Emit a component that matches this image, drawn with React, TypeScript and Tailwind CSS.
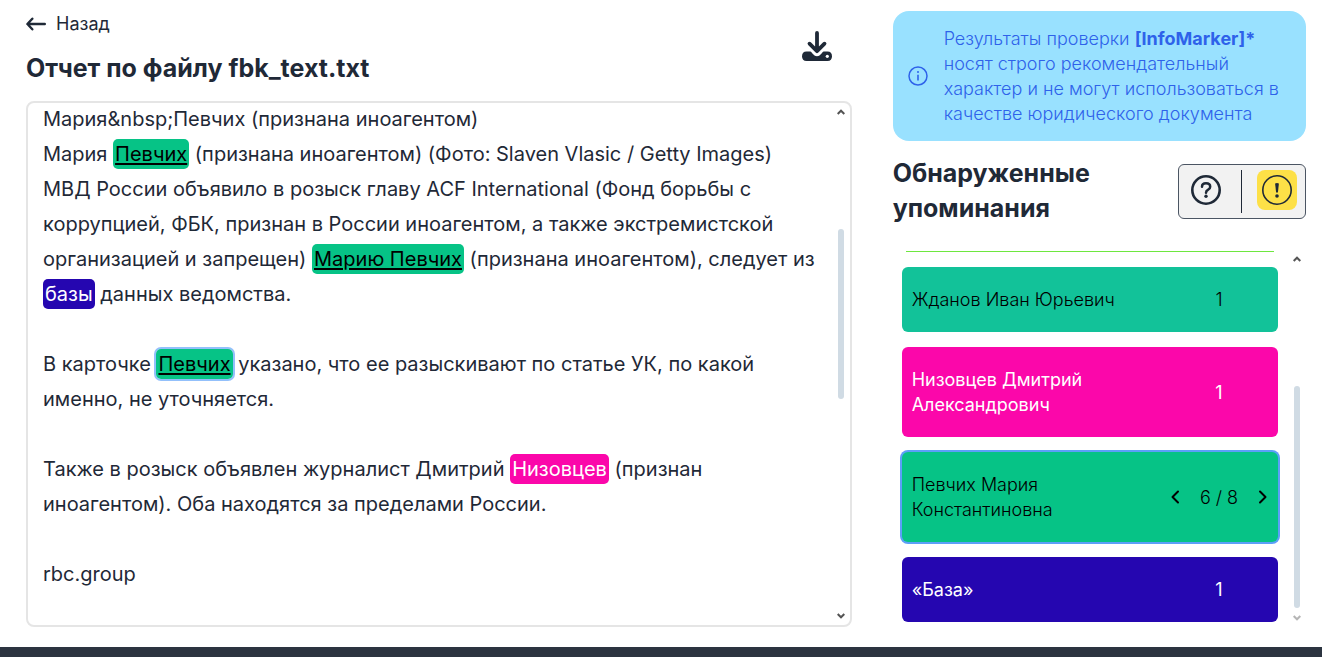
import type { ReactNode } from "react";

function ScrollArrow({ up, faded }: { up?: boolean; faded?: boolean }) {
  return (
    <svg viewBox="0 0 8 6" className={`h-1.5 w-2 shrink-0 ${faded ? "text-[#b5b5b5]" : "text-[#555555]"}`} aria-hidden="true">
      <path d={up ? "M0.7 5 L4 1.7 L7.3 5" : "M0.7 1 L4 4.3 L7.3 1"} fill="none" stroke="currentColor" strokeWidth="2" />
    </svg>
  );
}

const tones = {
  green: "bg-[#06c386] text-black underline underline-offset-2",
  blue: "bg-[#2506b0] text-white",
  pink: "bg-[#fb07aa] text-white",
};

function Mark({ tone, active, children }: { tone: keyof typeof tones; active?: boolean; children: ReactNode }) {
  return (
    <mark className={`rounded-[5px] px-0.5 py-[3px] ${tones[tone]} ${active ? "ring-2 ring-[#93c0fb]" : ""}`}>
      {children}
    </mark>
  );
}

type Mention = { name: string; count: string; style: string; active?: boolean };

const mentions: Mention[] = [
  { name: "Жданов Иван Юрьевич", count: "1", style: "bg-[#12c299] text-black font-light" },
  { name: "Низовцев Дмитрий Александрович", count: "1", style: "bg-[#fb07aa] text-white" },
  { name: "Певчих Мария Константиновна", count: "6 / 8", style: "bg-[#06c386] text-black font-light ring-2 ring-[#5c9ff8]", active: true },
  { name: "«База»", count: "1", style: "bg-[#2506b0] text-white" },
];

function Chevron({ next }: { next?: boolean }) {
  return (
    <svg viewBox="0 0 10 14" className="h-3.5 w-2.5" fill="none" stroke="currentColor" strokeWidth="2" strokeLinecap="round" strokeLinejoin="round" aria-hidden="true">
      <path d={next ? "M2 1.5 L7.5 7 L2 12.5" : "M8 1.5 L2.5 7 L8 12.5"} />
    </svg>
  );
}

function MentionCard({ m }: { m: Mention }) {
  return (
    <li className={`flex shrink-0 items-center justify-between rounded-md px-2.5 py-5 text-lg leading-[25px] ${m.style}`}>
      <span className="min-w-0 flex-1">{m.name}</span>
      <span className="flex w-[98px] shrink-0 items-center justify-between">
        {m.active && (
          <button type="button" aria-label="Предыдущее"><Chevron /></button>
        )}
        <span className="flex-1 text-center">{m.count}</span>
        {m.active && (
          <button type="button" aria-label="Следующее"><Chevron next /></button>
        )}
      </span>
    </li>
  );
}

export default function App() {
  return (
    <div className="flex min-h-screen flex-col bg-white font-['Inter',sans-serif] text-[#1f2937]">
      <main className="grid flex-1 grid-cols-[2fr_1fr] gap-10 pr-4 pb-5 pl-[26px]">
        <section className="flex min-w-0 flex-col pr-px">
          <header className="flex items-center justify-between pt-[11px] pr-5 pb-[15px]">
            <div>
              <a href="#back" className="flex items-center gap-2.5 text-lg leading-[25px]">
                <svg viewBox="0 0 20 14" className="h-3.5 w-5" fill="none" stroke="currentColor" strokeWidth="2.4" strokeLinecap="round" strokeLinejoin="round" aria-hidden="true">
                  <path d="M6.3 1.7 L1.4 7 L6.3 12.3 M1.6 7 H18.8" />
                </svg>
                Назад
              </a>
              <h1 className="mt-[15px] text-[25px] leading-[35px] font-bold">Отчет по файлу fbk_text.txt</h1>
            </div>
            <button type="button" aria-label="Скачать отчет" className="pb-1.5">
              <svg viewBox="0 0 30 30" className="size-[30px]" aria-hidden="true">
                <path d="M4.5 20.5 H25.5 Q30 20.7 30 25.2 Q30 30 25.5 30 H4.5 Q0 30 0 25.2 Q0 20.7 4.5 20.5 Z" fill="currentColor" />
                <path d="M6 13.5 L12.6 21.6 Q15 24.4 17.4 21.6 L24 13.5" fill="none" stroke="white" strokeWidth="4.5" />
                <path d="M15 2 V20 M7.5 12.7 L15 20.2 L22.5 12.7" fill="none" stroke="currentColor" strokeWidth="3.8" strokeLinecap="round" strokeLinejoin="round" />
                <circle cx="25.3" cy="25.3" r="1.6" fill="white" />
              </svg>
            </button>
          </header>
          <div className="flex h-[80vh] overflow-hidden rounded-lg border-2 border-[#e5e5e5]">
            <div className="flex min-w-0 flex-1 flex-col justify-end pb-[33px] pl-[15px] text-xl leading-[35px]">
              <p>Мария&amp;nbsp;Певчих (признана иноагентом)</p>
              <p>Мария <Mark tone="green">Певчих</Mark> (признана иноагентом) (Фото: Slaven Vlasic / Getty Images)</p>
              <p>
                МВД России объявило в розыск главу ACF International (Фонд борьбы с коррупцией, ФБК, признан в России
                иноагентом, а также экстремистской организацией и запрещен) <Mark tone="green">Марию Певчих</Mark>{" "}
                (признана иноагентом), следует из <Mark tone="blue">базы</Mark> данных ведомства.
              </p>
              <p className="mt-[35px]">
                В карточке <Mark tone="green" active>Певчих</Mark> указано, что ее разыскивают по статье УК, по какой
                именно, не уточняется.
              </p>
              <p className="mt-[35px]">
                Также в розыск объявлен журналист Дмитрий <Mark tone="pink">Низовцев</Mark> (признан иноагентом). Оба
                находятся за пределами России.
              </p>
              <p className="mt-[35px]">rbc.group</p>
            </div>
            <div className="flex w-[18px] shrink-0 flex-col items-center py-1.5">
              <ScrollArrow up />
              <div className="flex flex-1 flex-col">
                <div className="h-[23%]" />
                <div className="h-[34%] w-1.5 rounded-full bg-[#d0dbe4]" />
              </div>
              <ScrollArrow />
            </div>
          </div>
        </section>

        <aside className="flex min-w-0 flex-col pt-[11px]">
          <div className="flex items-center gap-4 rounded-2xl bg-[#99e1ff] p-[15px] text-[#2e62ea]">
            <svg viewBox="0 0 20 20" className="size-5 shrink-0" aria-hidden="true">
              <circle cx="10" cy="10" r="9" fill="none" stroke="currentColor" strokeWidth="1.5" />
              <path d="M10 8.8 V14.6" stroke="currentColor" strokeWidth="1.6" />
              <circle cx="10" cy="5.9" r="1" fill="currentColor" />
            </svg>
            <p className="text-lg leading-[25px] font-light">
              Результаты проверки <b className="font-bold">[InfoMarker]*</b> носят строго рекомендательный характер и не могут использоваться
              в качестве юридического документа
            </p>
          </div>

          <div className="mt-[15px] flex items-center justify-between gap-4">
            <h2 className="text-[25px] leading-[35px] font-bold">Обнаруженные упоминания</h2>
            <div className="flex h-[55px] w-32 shrink-0 items-start justify-between rounded-md border border-[#4b5563] bg-[#f2f2f2] pt-[5px] pr-2 pl-[7px]">
              <button type="button" aria-label="Справка" className="p-[5px]">
                <svg viewBox="0 0 30 30" className="size-[30px]" fill="none" stroke="currentColor" aria-hidden="true">
                  <circle cx="15" cy="15" r="13.7" strokeWidth="2.6" />
                  <path d="M11 11.7 Q11 8.3 15 8.3 Q19.2 8.3 19.2 11.7 Q19.2 13.6 17.2 14.6 Q15 15.7 15 17.8" strokeWidth="2.5" strokeLinecap="round" />
                  <circle cx="15" cy="21.3" r="1.7" fill="currentColor" stroke="none" />
                </svg>
              </button>
              <span className="h-[43px] w-px bg-[#1f2937]" />
              <button type="button" aria-label="Предупреждения" className="rounded-lg bg-[#fde047] p-[5px]">
                <svg viewBox="0 0 30 30" className="size-[30px]" aria-hidden="true">
                  <circle cx="15" cy="15" r="14.2" fill="none" stroke="currentColor" strokeWidth="1.6" />
                  <path d="M13.1 8.6 Q15 7.6 16.9 8.6 L15.9 17.6 H14.1 Z" fill="currentColor" />
                  <circle cx="15" cy="21" r="1.8" fill="currentColor" />
                </svg>
              </button>
            </div>
          </div>

          <div className="mt-[25px] flex flex-1 overflow-hidden">
            <ul className="flex min-w-0 flex-1 flex-col gap-[15px] pr-2.5 pl-[9px]">
              <li className="mx-1 h-px shrink-0 bg-[#6ee73f]" />
              {mentions.map((m) => (
                <MentionCard key={m.name} m={m} />
              ))}
            </ul>
            <div className="flex w-[18px] shrink-0 flex-col items-center pt-[5px] pb-1.5">
              <ScrollArrow up />
              <div className="flex flex-1 flex-col">
                <div className="h-[35%]" />
                <div className="h-[63%] w-1.5 rounded-full bg-[#d0dbe4]" />
              </div>
              <ScrollArrow faded />
            </div>
          </div>
        </aside>
      </main>
      <footer className="h-2.5 bg-[#2c3440]" />
    </div>
  );
}
